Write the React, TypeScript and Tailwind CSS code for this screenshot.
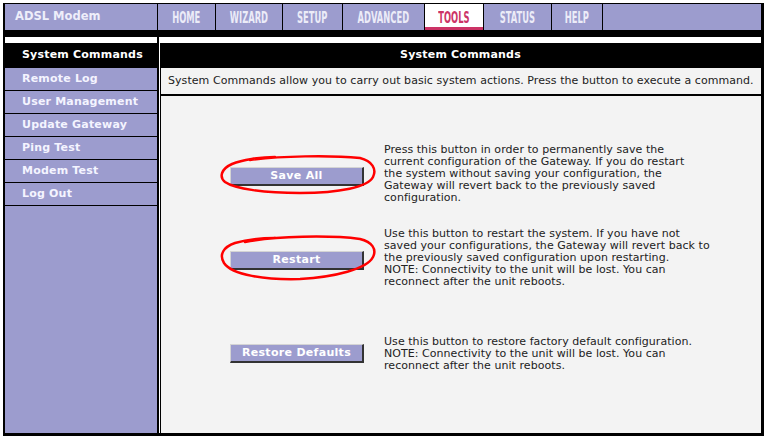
import React from "react";

interface Tab {
  label: string;
  width: string;
  active?: boolean;
}

const tabs: Tab[] = [
  { label: "HOME", width: "w-[57px]" },
  { label: "WIZARD", width: "w-[66px]" },
  { label: "SETUP", width: "w-[59px]" },
  { label: "ADVANCED", width: "w-[81px]" },
  { label: "TOOLS", width: "w-[58px]", active: true },
  { label: "STATUS", width: "w-[67px]" },
  { label: "HELP", width: "w-[50px]" },
];

const menu = [
  "Remote Log",
  "User Management",
  "Update Gateway",
  "Ping Test",
  "Modem Test",
  "Log Out",
];

// hand drawn red rings around two of the buttons
const ring1 =
  "M 30 5 C 60 1, 110 0, 140 3 C 152 6, 157 14, 153 22 C 148 32, 120 38, 80 38 C 45 38, 15 34, 5 27 C -1 22, 1 14, 12 9 C 22 5, 40 2, 55 2";
const ring2 =
  "M 25 7 C 55 1, 110 0, 140 4 C 152 7, 157 14, 153 22 C 147 34, 115 42, 80 44 C 45 45, 12 40, 4 28 C -1 20, 3 12, 15 8 C 25 5, 40 3, 55 3";

function Ring({ d, tall }: { d: string; tall?: boolean }) {
  return (
    <svg
      className={`absolute left-[-10px] pointer-events-none overflow-visible ${tall ? "top-[-11px] w-[156px] h-[47px]" : "top-[-7px] w-[156px] h-[40px]"}`}
      viewBox={tall ? "0 0 156 47" : "0 0 156 40"}
      fill="none"
    >
      <path d={d} stroke="#ff0000" strokeWidth={2.5} strokeLinecap="round" strokeLinejoin="round" />
    </svg>
  );
}

function CmdButton({ label, ring, tall }: { label: string; ring?: string; tall?: boolean }) {
  return (
    <div className="relative shrink-0">
      <button className="w-[134px] h-[19px] bg-[#9c9cce] border-t border-l border-t-[#d4d4d4] border-l-[#d4d4d4] border-b-2 border-r-2 border-b-[#333] border-r-[#333] text-white font-bold text-[11px] tracking-[0.3px] leading-none font-['DejaVu_Sans',sans-serif]">
        {label}
      </button>
      {ring && <Ring d={ring} tall={tall} />}
    </div>
  );
}

function Row({ children, lines }: { children: React.ReactNode; lines: string[] }) {
  return (
    <div className="flex items-center">
      <div className="pl-[69px] w-[223px] shrink-0">{children}</div>
      <p className="text-[11px] leading-[12px] text-[#222] whitespace-nowrap tracking-[0.05px]">
        {lines.map((l, i) => (
          <React.Fragment key={i}>
            {l}
            {i < lines.length - 1 && <br />}
          </React.Fragment>
        ))}
      </p>
    </div>
  );
}

export default function App() {
  return (
    <div className="w-[766px] h-[437px] bg-white pt-[3px] pl-[3px] font-['DejaVu_Sans',sans-serif]">
      <div className="w-[761px] h-[433px] bg-black pt-px pl-[2px] pr-[3px] pb-[3px] flex flex-col">
        {/* top nav */}
        <div className="h-[26px] flex gap-px shrink-0">
          <div className="w-[152px] bg-[#9c9cce] flex items-center pl-[10px] text-[11.5px] font-bold text-[#eeeefa]">
            ADSL Modem
          </div>
          {tabs.map((t) => (
            <div
              key={t.label}
              className={`${t.width} relative flex items-center justify-center ${t.active ? "bg-white text-[#cc3366]" : "bg-[#9c9cce] text-[#ececf8]"}`}
            >
              <span className="inline-block scale-x-[0.58] font-['DejaVu_Sans_Condensed','DejaVu_Sans',sans-serif] font-bold text-[16px] leading-none pt-[1px]">
                {t.label}
              </span>
              {t.active && <div className="absolute left-0 right-0 bottom-0 h-[3px] bg-[#cc3366]" />}
            </div>
          ))}
          <div className="flex-1 bg-[#9c9cce]" />
        </div>

        <div className="h-[7px] shrink-0" />
        <div className="h-[6px] flex gap-[2px] shrink-0">
          <div className="w-[152px] bg-white" />
          <div className="flex-1 bg-white" />
        </div>

        <div className="flex-1 flex gap-[2px] min-h-0">
          {/* side menu */}
          <div className="w-[152px] flex flex-col text-[11px] font-bold">
            <div className="h-[25px] bg-black text-white flex items-center pl-[17px] tracking-[0.2px]">
              System Commands
            </div>
            {menu.map((m) => (
              <div
                key={m}
                className="h-[23px] bg-[#9c9cce] border-b border-black text-[#f4f4ff] flex items-center pl-[17px] tracking-[0.2px]"
              >
                {m}
              </div>
            ))}
            <div className="flex-1 bg-[#9c9cce]" />
          </div>

          {/* content */}
          <div className="flex-1 flex flex-col border-l border-white">
            <div className="h-[25px] bg-black text-white text-[11px] font-bold flex items-center justify-center tracking-[0.2px]">
              System Commands
            </div>
            <div className="h-[26px] ml-px bg-[#f3f3f3] flex items-center pl-[7px] text-[11px] text-[#222] whitespace-nowrap tracking-[0.06px]">
              System Commands allow you to carry out basic system actions. Press the button to execute a command.
            </div>
            <div className="h-[2px]" />
            <div className="flex-1 ml-px bg-[#f3f3f3] pt-[48px] flex flex-col">
              <Row
                lines={[
                  "Press this button in order to permanently save the",
                  "current configuration of the Gateway. If you do restart",
                  "the system without saving your configuration, the",
                  "Gateway will revert back to the previously saved",
                  "configuration.",
                ]}
              >
                <CmdButton label="Save All" ring={ring1} />
              </Row>
              <div className="h-[24px]" />
              <Row
                lines={[
                  "Use this button to restart the system. If you have not",
                  "saved your configurations, the Gateway will revert back to",
                  "the previously saved configuration upon restarting.",
                  "NOTE: Connectivity to the unit will be lost. You can",
                  "reconnect after the unit reboots.",
                ]}
              >
                <CmdButton label="Restart" ring={ring2} tall />
              </Row>
              <div className="h-[48px]" />
              <Row
                lines={[
                  "Use this button to restore factory default configuration.",
                  "NOTE: Connectivity to the unit will be lost. You can",
                  "reconnect after the unit reboots.",
                ]}
              >
                <div className="-mt-[6px]">
                  <CmdButton label="Restore Defaults" />
                </div>
              </Row>
            </div>
          </div>
        </div>
      </div>
    </div>
  );
}
